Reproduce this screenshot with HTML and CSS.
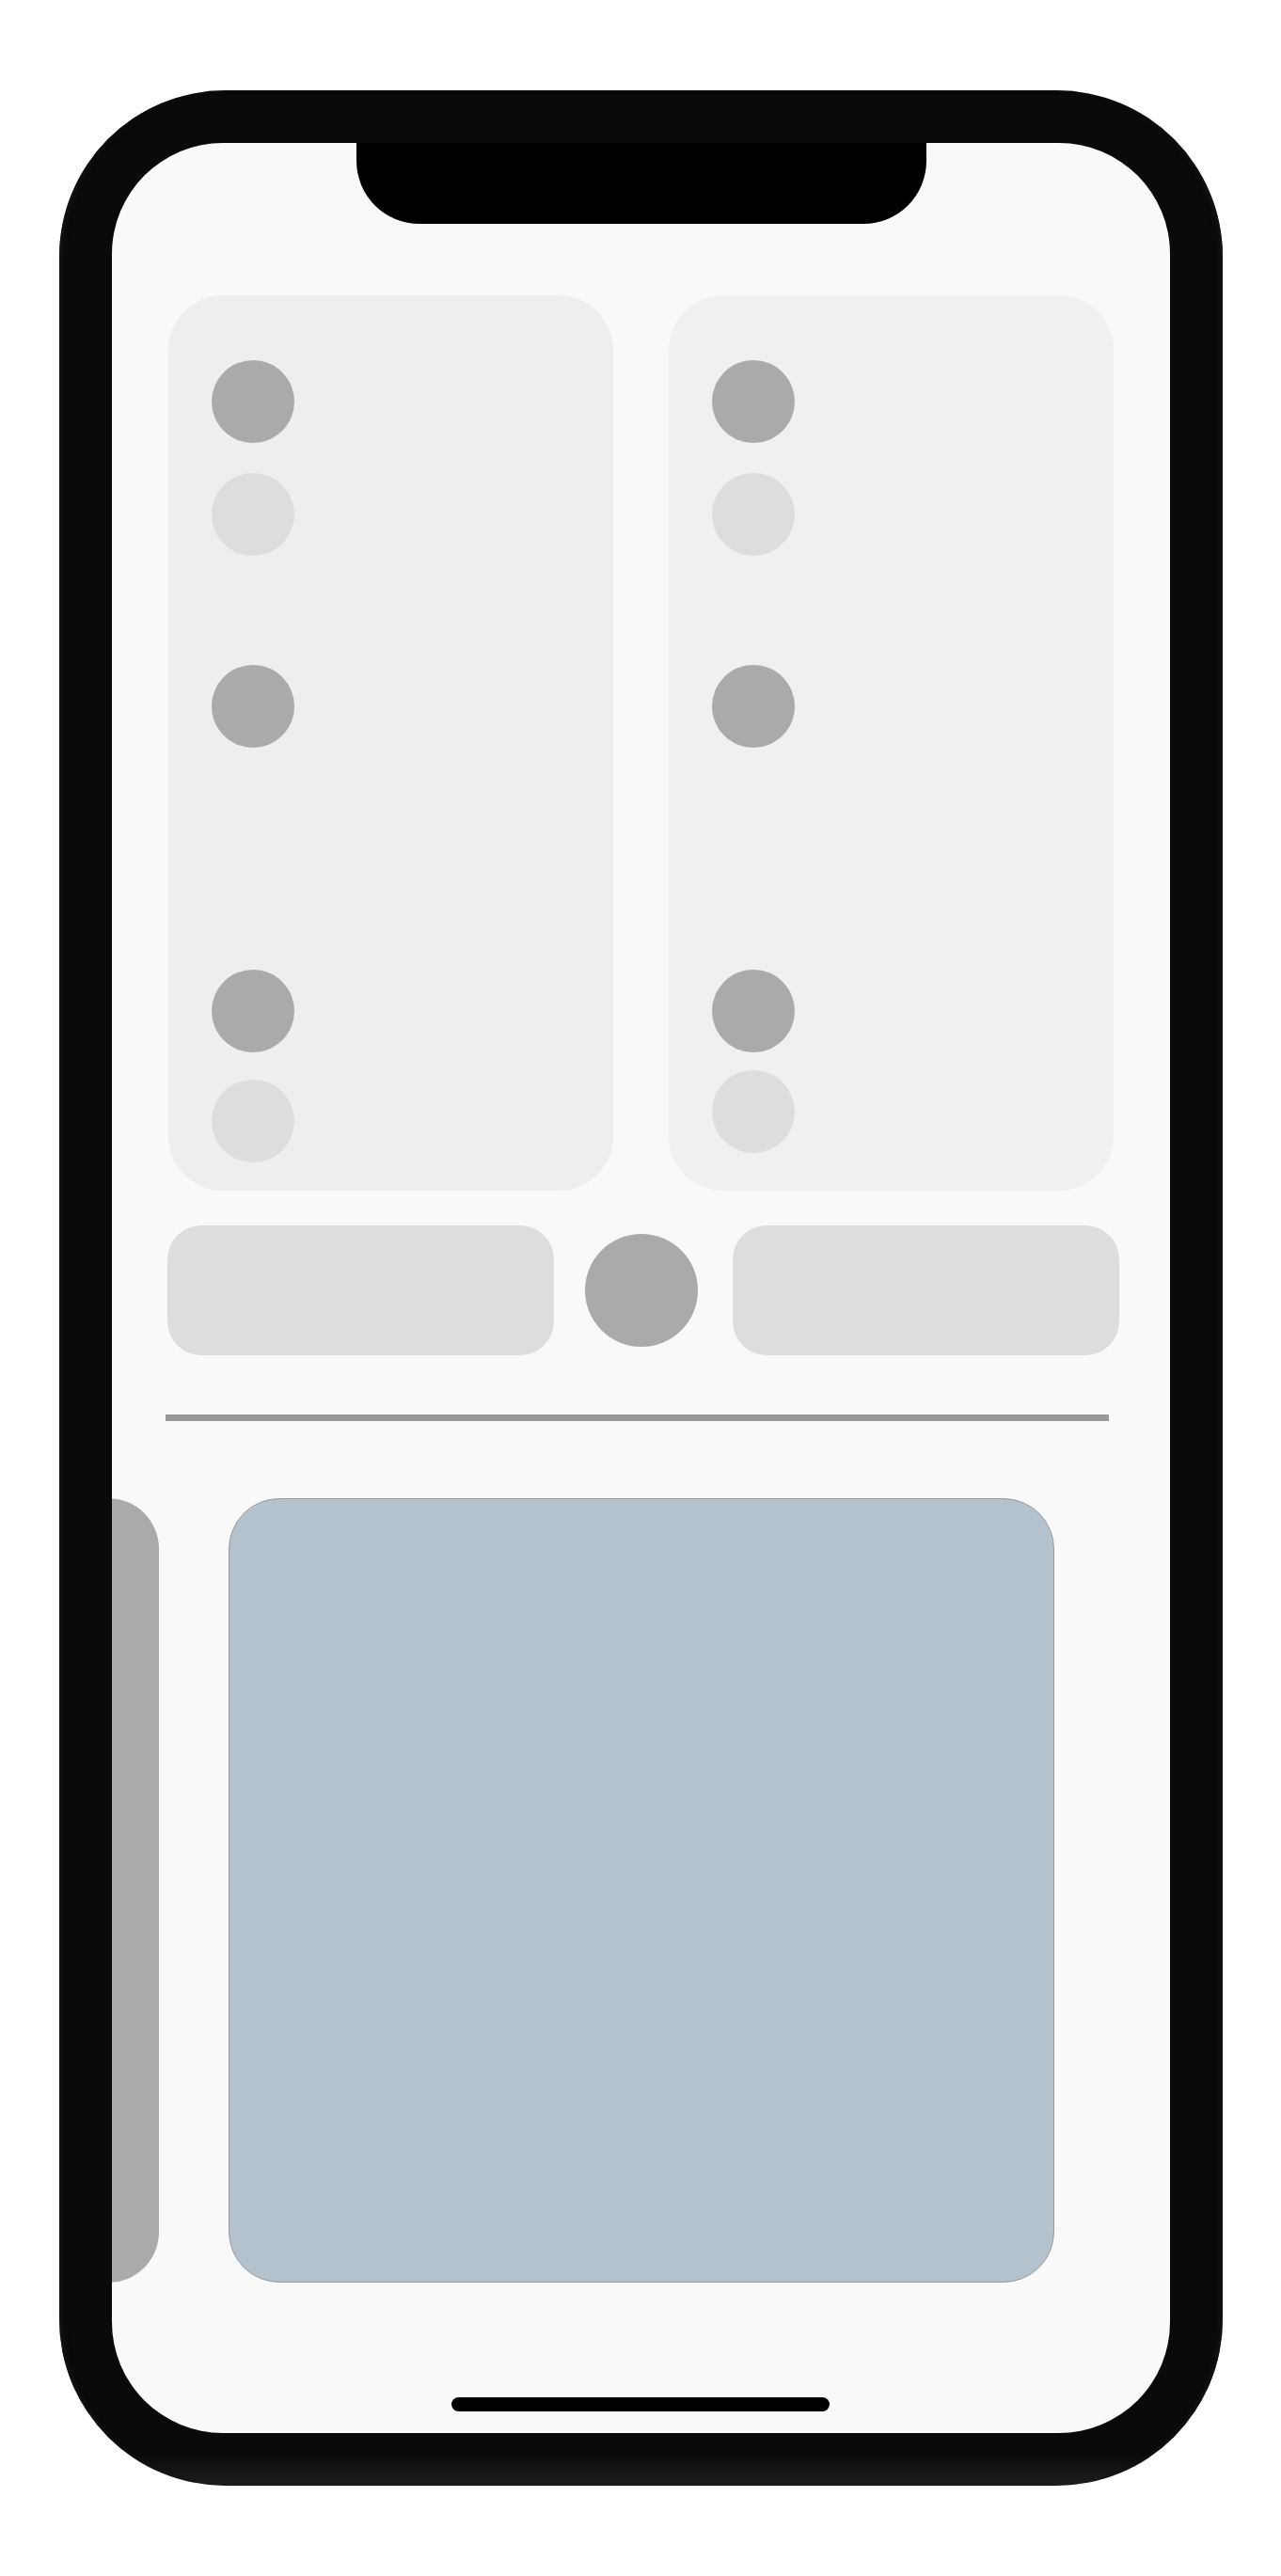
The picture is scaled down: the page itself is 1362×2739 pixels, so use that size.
FILE: index.html
```html
<!DOCTYPE html>
<html lang="en">
  <head>
    <meta charset="UTF-8" />
    <meta name="viewport" content="width=device-width, initial-scale=1" />
    <title>Wireframe | Phone</title>
    <link rel="stylesheet" href="styles.css">
  </head>
  <body>
    <div class="phone">
      <div class="screen">
        <div class="notch"></div>
        <div class="content">
          <div class="cards">
            <div class="card">
              <span class="dot dark"></span>
              <span class="dot light gap-sm"></span>
              <span class="dot dark gap-md"></span>
              <span class="dot dark gap-lg"></span>
              <span class="dot light gap-end"></span>
            </div>
            <div class="card card-alt">
              <span class="dot dark"></span>
              <span class="dot light gap-sm"></span>
              <span class="dot dark gap-md"></span>
              <span class="dot dark gap-lg"></span>
              <span class="dot light gap-end-alt"></span>
            </div>
          </div>
          <div class="controls">
            <div class="pill"></div>
            <div class="round-btn"></div>
            <div class="pill"></div>
          </div>
          <hr class="divider" />
        </div>
        <div class="carousel">
          <div class="slide slide-prev"></div>
          <div class="slide slide-current"></div>
        </div>
        <div class="home-bar"></div>
      </div>
    </div>
  </body>
</html>
```
FILE: styles.css
```css
body {
  margin: 0;
  height: 100vh;
  background: #ffffff;
  display: flex;
  justify-content: center;
  align-items: center;
  font-family: "Liberation Sans", Arial, sans-serif;
}
.phone {
  width: 1237px;
  height: 2547px;
  padding: 56px;
  box-sizing: border-box;
  border-radius: 177px;
  background: linear-gradient(#0a0a0a 0, #0a0a0a calc(100% - 34px), #1f1f1f 100%);
  box-shadow: inset 5px 0 6px -3px #161616, inset -5px 0 6px -3px #161616;
}
.screen {
  position: relative;
  width: 1125px;
  height: 2435px;
  border-radius: 118px;
  background: #f9f9f9;
  overflow: hidden;
}
.notch {
  position: absolute;
  top: 0;
  left: 260px;
  width: 606px;
  height: 86px;
  background: #000;
  border-radius: 0 0 67px 67px;
}
.content {
  padding: 162px 60px 0;
}
.cards {
  display: grid;
  grid-template-columns: 473px 473px;
  gap: 59px;
}
.card {
  height: 952px;
  box-sizing: border-box;
  padding: 69px 0 0 46px;
  border-radius: 58px;
  background: #eeeeee;
  display: flex;
  flex-direction: column;
  align-items: flex-start;
}
.card-alt {
  background: #f0f0f0;
}
.dot {
  display: block;
  width: 88px;
  height: 88px;
  border-radius: 50%;
  flex-shrink: 0;
}
.dot.dark {
  background: #aaaaaa;
}
.dot.light {
  background: #dddddd;
}
.gap-sm {
  margin-top: 32px;
}
.gap-md {
  margin-top: 116px;
}
.gap-lg {
  margin-top: 236px;
}
.gap-end {
  margin-top: 29px;
}
.gap-end-alt {
  margin-top: 19px;
}
.controls {
  display: flex;
  align-items: center;
  margin: 37px 0 0 -1px;
  height: 138px;
}
.pill {
  width: 411px;
  height: 138px;
  border-radius: 36px;
  background: #dddddd;
  flex-shrink: 0;
}
.round-btn {
  width: 120px;
  height: 120px;
  margin: 0 37px 0 33px;
  border-radius: 50%;
  background: #aaaaaa;
  flex-shrink: 0;
}
.divider {
  border: 0;
  width: 1003px;
  height: 7px;
  margin: 63px 0 0 -3px;
  background: #999999;
}
.carousel {
  display: flex;
  justify-content: flex-end;
  gap: 74px;
  margin-top: 82px;
  padding-right: 123px;
}
.slide {
  width: 878px;
  height: 834px;
  box-sizing: border-box;
  border-radius: 54px;
  flex-shrink: 0;
}
.slide-prev {
  background: #aaaaaa;
}
.slide-current {
  background: #b4c2ce;
  border: 1px solid #9a9a9a;
}
.home-bar {
  position: absolute;
  bottom: 23px;
  left: 361px;
  width: 402px;
  height: 15px;
  border-radius: 8px;
  background: #000;
}
```
